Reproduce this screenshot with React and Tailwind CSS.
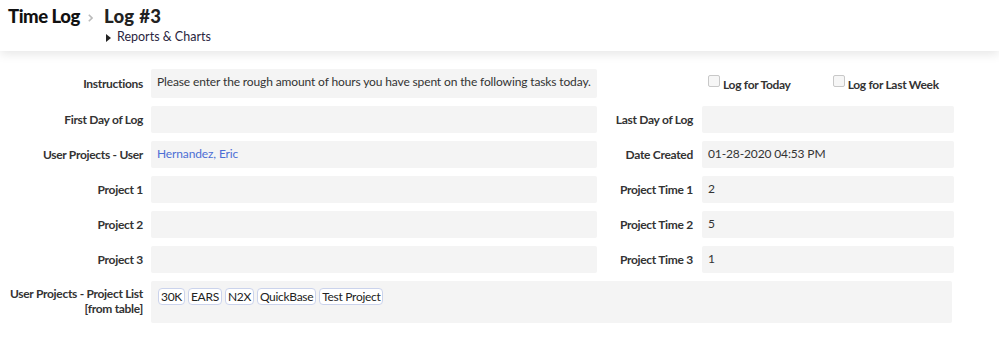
import React from "react";

const font = { fontFamily: "Lato, 'Open Sans', sans-serif" };

function Label({ children, className = "" }) {
  return (
    <div className={"text-right text-[12px] font-bold text-[#333] leading-[15px] tracking-[-0.3px] " + className}>
      {children}
    </div>
  );
}

function Row({ label, children, rightLabel, right, h = "h-[27px]" }) {
  return (
    <div className="flex items-start">
      <div className={"w-[143px] flex items-center justify-end " + h}>
        <Label>{label}</Label>
      </div>
      <div className={"ml-[8px] w-[446px] bg-[#f4f4f4] rounded-[2px] px-[6px] pt-[5px] text-[12px] leading-[16px] text-[#333] tracking-[-0.13px] whitespace-nowrap " + h}>
        {children}
      </div>
      <div className={"w-[96px] flex items-center justify-end " + h}>
        {rightLabel && <Label>{rightLabel}</Label>}
      </div>
      {right}
    </div>
  );
}

function RField({ children, h = "h-[27px]" }) {
  return (
    <div className={"ml-[9px] w-[252px] bg-[#f4f4f4] rounded-[2px] px-[6px] pt-[5px] text-[12px] leading-[16px] text-[#333] tracking-[-0.13px] " + h}>
      {children}
    </div>
  );
}

function Check({ label }) {
  return (
    <div className="flex items-center">
      <div className="w-[12px] h-[12px] rounded-[2px] border border-[#c8c8c8] bg-[#f6f6f6] mt-[-6px]" />
      <span className="ml-[3px] text-[12px] font-bold text-[#333] mt-[2px] tracking-[-0.3px]">{label}</span>
    </div>
  );
}

function Tag({ children }) {
  return (
    <span className="inline-flex items-center h-[17px] px-[2px] rounded-[4px] border border-[#cbd3ec] bg-white text-[12px] text-[#222] leading-none tracking-[-0.3px]">
      {children}
    </span>
  );
}

export default function App() {
  return (
    <div className="w-[999px] h-[339px] bg-white overflow-hidden" style={font}>
      <div className="relative h-[51px] bg-white shadow-[0_3px_10px_rgba(0,0,0,0.1)]">
        <div className="flex items-baseline pl-[8px] pt-[3px]">
          <span className="text-[18.5px] font-black text-[#111] tracking-[-0.45px]">Time Log</span>
          <svg width="5" height="8" viewBox="0 0 5 8" className="ml-[8px] self-center mt-[2px]">
            <path d="M0.8 0.8 L4 4 L0.8 7.2" fill="none" stroke="#bbb" strokeWidth="1.6" />
          </svg>
          <span className="ml-[11px] text-[18.5px] font-black text-[#222] tracking-[0.3px]">Log #3</span>
        </div>
        <div className="flex items-center pl-[106px] mt-[-3px]">
          <svg width="5" height="8" viewBox="0 0 5 8" className="mt-[1px]">
            <path d="M0 0 L5 4 L0 8 Z" fill="#222" />
          </svg>
          <span className="ml-[6px] text-[12.5px] text-[#2a2540]">Reports &amp; Charts</span>
        </div>
      </div>
      <div className="pt-[18px] flex flex-col gap-[8px]">
        <Row
          label="Instructions"
          h="h-[29px]"
          right={
            <div className="flex ml-[15px] h-[29px] items-center gap-[42px] pt-[1px]">
              <Check label="Log for Today" />
              <Check label="Log for Last Week" />
            </div>
          }
        >
          Please enter the rough amount of hours you have spent on the following tasks today.
        </Row>
        <Row label="First Day of Log" rightLabel="Last Day of Log" right={<RField />} />
        <Row
          label="User Projects - User"
          rightLabel="Date Created"
          right={<RField>01-28-2020 04:53 PM</RField>}
        >
          <span className="text-[#4d6fd5]">Hernandez, Eric</span>
        </Row>
        <Row label="Project 1" rightLabel="Project Time 1" right={<RField>2</RField>} />
        <Row label="Project 2" rightLabel="Project Time 2" right={<RField>5</RField>} />
        <Row label="Project 3" rightLabel="Project Time 3" right={<RField>1</RField>} />
        <div className="flex items-start">
          <div className="w-[143px] pt-[5px]">
            <Label>
              User Projects - Project List
              <br />
              [from table]
            </Label>
          </div>
          <div className="ml-[8px] w-[801px] h-[42px] bg-[#f4f4f4] rounded-[2px] pl-[7px] pt-[7px] flex gap-[3px] items-start">
            <Tag>30K</Tag>
            <Tag>EARS</Tag>
            <Tag>N2X</Tag>
            <Tag>QuickBase</Tag>
            <Tag>Test Project</Tag>
          </div>
        </div>
      </div>
    </div>
  );
}
